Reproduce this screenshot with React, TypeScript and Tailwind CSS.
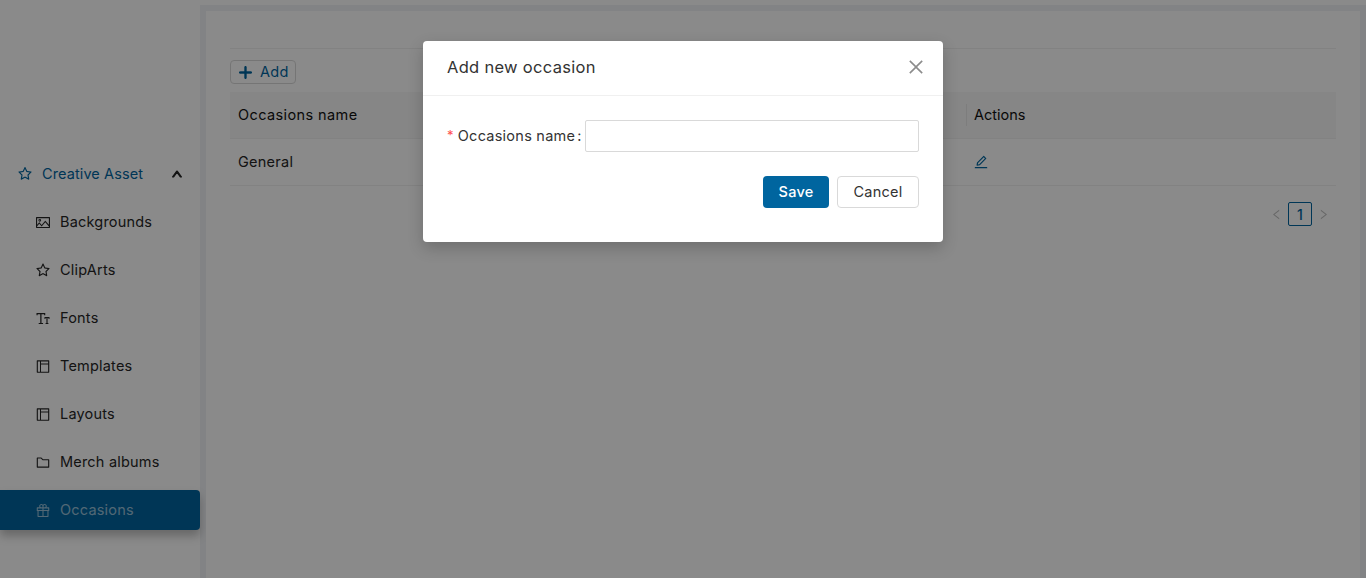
import type { ReactNode } from "react";
import {
  AiOutlineClose,
  AiOutlineEdit,
  AiOutlineFolder,
  AiOutlineFontSize,
  AiOutlineGift,
  AiOutlineLayout,
  AiOutlineLeft,
  AiOutlinePicture,
  AiOutlinePlus,
  AiOutlineRight,
  AiOutlineStar,
  AiOutlineUp,
} from "react-icons/ai";

const font = "font-['Inter','Liberation_Sans',sans-serif]";

function NavItem({ icon, label, active }: { icon: ReactNode; label: string; active?: boolean }) {
  return (
    <div
      className={`flex h-10 items-center gap-[9px] rounded-r pl-[35px] text-[14.5px] tracking-[0.2px] ${
        active ? "bg-[#00659f] text-white/60 shadow-[0_6px_10px_rgba(0,0,0,0.25)]" : "text-[#262626]"
      }`}
    >
      <span className="flex w-4 justify-center text-[17px]">{icon}</span>
      {label}
    </div>
  );
}

export default function App() {
  return (
    <div className={`${font} relative flex h-screen overflow-hidden bg-[#f0f2f5]`}>
      <aside className="flex w-[200px] shrink-0 flex-col gap-2 bg-white pt-[154px]">
        <div className="flex h-10 items-center pl-[17px] pr-[17px] text-[14.5px] tracking-[0.1px] text-[#00659f]">
          <AiOutlineStar className="text-[16px]" />
          <span className="ml-[9px] flex-1">Creative Asset</span>
          <AiOutlineUp className="text-[12px] text-[#262626]" strokeWidth={90} />
        </div>
        <NavItem icon={<AiOutlinePicture />} label="Backgrounds" />
        <NavItem icon={<AiOutlineStar />} label="ClipArts" />
        <NavItem icon={<AiOutlineFontSize />} label="Fonts" />
        <NavItem icon={<AiOutlineLayout />} label="Templates" />
        <NavItem icon={<AiOutlineLayout />} label="Layouts" />
        <NavItem icon={<AiOutlineFolder />} label="Merch albums" />
        <NavItem icon={<AiOutlineGift />} label="Occasions" active />
      </aside>

      <div className="flex min-w-0 flex-1 flex-col">
        <div className="h-[5px] bg-white" />
        <main className="mx-[6px] mt-[6px] flex-1 bg-white px-6 pt-[37px]">
          <div className="border-t border-[#f0f0f0] pt-[11px]">
            <button className="flex h-6 w-[66px] items-center gap-[6px] rounded border border-[#d9d9d9] pl-[6px] text-[14.5px] tracking-[0.25px] text-[#00659f]">
              <AiOutlinePlus className="text-[17px] text-[#00659f]" strokeWidth={60} />
              Add
            </button>
          </div>

          <div className="mt-2 grid grid-cols-[736px_1fr] text-[14.5px] tracking-[0.25px]">
            <div className="flex h-[47px] items-center border-b border-[#f0f0f0] bg-[#f7f7f7] pl-2 tracking-[0.4px] text-[#111]">
              Occasions name
            </div>
            <div className="flex h-[47px] items-center border-b border-[#f0f0f0] bg-[#f7f7f7] tracking-[0px] text-[#111]">
              <span className="mr-[7px] h-[22px] border-l border-[#e8e8e8]" />
              Actions
            </div>
            <div className="flex h-[47px] items-center border-b border-[#f0f0f0] pl-2 text-[#262626]">General</div>
            <div className="flex h-[47px] items-center border-b border-[#f0f0f0] pl-[7px] text-[#00659f]">
              <AiOutlineEdit className="text-[16px]" />
            </div>
          </div>

          <div className="mt-4 flex items-center justify-end gap-[5px] pr-[6px] text-[#bfbfbf]">
            <AiOutlineLeft className="text-[13px]" />
            <span className="flex h-6 w-6 items-center justify-center rounded-[2px] border border-[#00659f] text-[14px] font-medium text-[#00659f]">
              1
            </span>
            <AiOutlineRight className="text-[13px]" />
          </div>
        </main>
      </div>

      {/* modal overlay */}
      <div className="absolute inset-0 flex justify-center bg-black/[0.46] pt-[41px]">
        <div className="h-[201px] w-[520px] rounded bg-white shadow-[0_6px_16px_rgba(0,0,0,0.2)]">
          <div className="flex h-[55px] items-center justify-between border-b border-[#f0f0f0] pb-[2px] pl-6 pr-[17px]">
            <span className="text-[16.5px] tracking-[0.3px] text-[#333]">Add new occasion</span>
            <AiOutlineClose className="text-[20px] text-[#8c8c8c]" />
          </div>
          <div className="px-6 pt-6">
            <div className="flex h-8 items-center text-[14.5px] tracking-[0.25px] text-[#333]">
              <span className="mr-[4px] text-[13px] text-[#ff4d4f]">*</span>
              <span>Occasions name</span>
              <span className="ml-[2px] mr-[3px]">:</span>
              <input className="h-8 flex-1 rounded-[2px] border border-[#d9d9d9] outline-none" />
            </div>
            <div className="mt-6 flex justify-end gap-2 text-[14.5px] tracking-[0.25px]">
              <button className="h-8 w-[66px] rounded bg-[#00659f] font-medium text-white">Save</button>
              <button className="h-8 w-[82px] rounded border border-[#d9d9d9] text-[#333]">Cancel</button>
            </div>
          </div>
        </div>
      </div>
    </div>
  );
}
